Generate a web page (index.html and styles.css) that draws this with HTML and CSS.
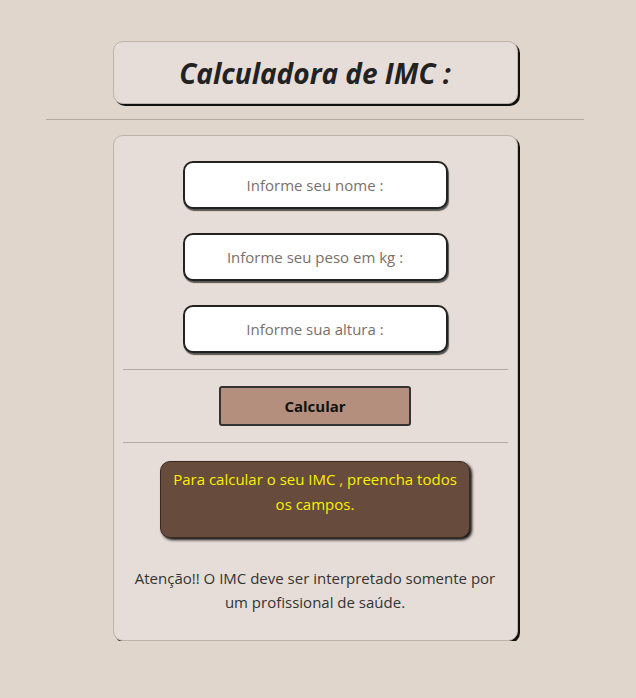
FILE: index.html
```html
<!DOCTYPE html>
<html lang="pt-BR">
<head>
<meta charset="utf-8">
<title>Calculadora de IMC</title>
<link rel="stylesheet" href="styles.css">
</head>
<body>
<header class="header">
  <h1 class="title">Calculadora de IMC :</h1>
</header>
<hr class="rule">
<main class="card">
  <div class="fields">
    <input class="field" type="text" placeholder="Informe seu nome :">
    <input class="field" type="text" placeholder="Informe seu peso em kg :">
    <input class="field" type="text" placeholder="Informe sua altura :">
  </div>
  <hr class="inner-rule">
  <button class="btn" type="button">Calcular</button>
  <hr class="inner-rule">
  <div class="message">Para calcular o seu IMC , preencha todos os campos.</div>
  <p class="note">Atenção!! O IMC deve ser interpretado somente por um profissional de saúde.</p>
</main>
</body>
</html>
```
FILE: styles.css
```css
* { box-sizing: border-box; }
body {
  margin: 0;
  background: #e0d6cc;
  font-family: "Open Sans", "Noto Sans", sans-serif;
  color: #333;
  padding: 41px 6px 0 0;
}
.header {
  width: 405px;
  height: 63px;
  margin: 0 auto;
  background: #e7ddd8;
  border: 1px solid #bfb3ab;
  border-radius: 10px;
  box-shadow: 2px 2px 0 #111;
  display: flex;
  align-items: center;
  justify-content: center;
}
.title {
  margin: 0;
  font-size: 28px;
  font-style: italic;
  font-weight: 700;
  color: #222;
  letter-spacing: 0;
}
.rule {
  width: 538px;
  margin: 15px auto 15px;
  border: 0;
  border-top: 1px solid #b5a9a1;
  height: 0;
}
.card {
  width: 405px;
  margin: 0 auto;
  background: #e7ddd8;
  border: 1px solid #bfb3ab;
  border-radius: 10px;
  box-shadow: 2px 2px 0 #111;
  padding: 25px 9px 26px;
  display: flex;
  flex-direction: column;
  align-items: center;
}
.fields {
  display: flex;
  flex-direction: column;
  gap: 24px;
  align-items: center;
}
.field {
  width: 265px;
  height: 48px;
  background: #fff;
  border: 2px solid #222;
  border-radius: 10px;
  box-shadow: 1px 2px 1px #555;
  text-align: center;
  font-family: inherit;
  font-size: 15px;
  color: #333;
  outline: none;
}
.field::placeholder { color: #7a6f6a; }
.inner-rule {
  align-self: stretch;
  border: 0;
  border-top: 1px solid #b5a9a1;
  margin: 16px 0;
  height: 0;
}
.btn {
  width: 192px;
  height: 40px;
  background: #b48f7d;
  border: 2px solid #333;
  border-radius: 3px;
  font-family: inherit;
  font-size: 15px;
  font-weight: 700;
  color: #111;
}
.message {
  width: 310px;
  height: 77px;
  margin-top: 2px;
  background: #674b3c;
  color: #f7f200;
  border: 1px solid #3a2a22;
  border-radius: 10px;
  box-shadow: 2px 2px 3px #111;
  font-size: 15px;
  line-height: 25px;
  text-align: center;
  padding: 5px 10px;
}
.note {
  margin: 28px 0 0;
  text-align: center;
  font-size: 15px;
  line-height: 24px;
  color: #333;
  padding: 0 8px;
}
```
